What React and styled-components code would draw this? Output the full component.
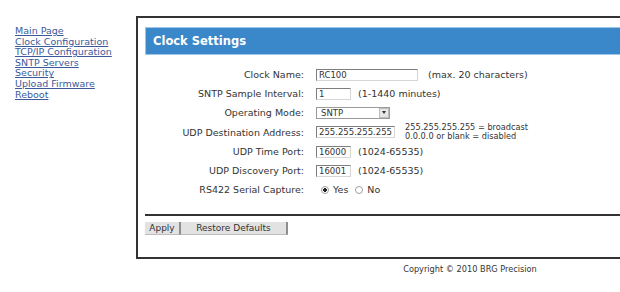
import React from "react";
import styled, { createGlobalStyle } from "styled-components";

const GlobalStyle = createGlobalStyle`
  html, body {
    margin: 0;
    padding: 0;
    background: #ffffff;
    overflow: hidden;
  }
  body {
    font-family: "DejaVu Sans", Verdana, sans-serif;
    color: #333333;
  }
`;

const Page = styled.div`
  display: flex;
  align-items: flex-start;
  width: max-content;
  padding: 16px 0 0 15px;
`;

const Nav = styled.nav`
  width: 121px;
  padding-top: 10px;
  display: flex;
  flex-direction: column;
`;

const NavLink = styled.a`
  font-size: 9.5px;
  line-height: 10.6px;
  color: #3c5a9a;
  text-decoration: underline;
  width: max-content;
`;

const Main = styled.div`
  width: 668px;
  display: flex;
  flex-direction: column;
`;

const Panel = styled.div`
  border: 2px solid #333333;
  padding: 9px 7px 22px 7px;
`;

const Header = styled.div`
  height: 26px;
  display: flex;
  align-items: center;
  padding-left: 7px;
  background: #3a87c9;
  border: 1px solid #9cc6ea;
  color: #ffffff;
  font-weight: bold;
  font-size: 11.5px;
`;

const Form = styled.div`
  margin-top: 10px;
  display: grid;
  grid-template-columns: 159px 1fr;
  column-gap: 12px;
`;

const Label = styled.div`
  font-size: 9.5px;
  display: flex;
  align-items: center;
  justify-content: flex-end;
  height: ${(p) => (p.$tall ? "20px" : "19px")};
`;

const Field = styled.div`
  display: flex;
  align-items: center;
  gap: 7px;
  height: ${(p) => (p.$tall ? "20px" : "19px")};
`;

const TextInput = styled.input`
  box-sizing: border-box;
  width: ${(p) => p.$w}px;
  height: 12px;
  padding: 0 2px;
  margin: 0;
  border: 1px solid;
  border-color: #7d7d7d #d6d6d6 #d6d6d6 #7d7d7d;
  font-family: "DejaVu Sans", Verdana, sans-serif;
  font-size: 8.5px;
  color: #333333;
  background: #ffffff;
  outline: none;
`;

const Hint = styled.span`
  font-size: 9.5px;
  color: #333333;
  white-space: nowrap;
  margin-left: ${(p) => p.$shift || 0}px;
`;

const SmallNote = styled.div`
  font-size: 8.2px;
  line-height: 9px;
  color: #333333;
  margin-left: 3px;
  white-space: nowrap;
`;

const SelectBox = styled.div`
  box-sizing: border-box;
  width: 74px;
  height: 12px;
  border: 1px solid #9a9a9a;
  background: #ffffff;
  display: flex;
  align-items: center;
  justify-content: space-between;
  padding: 0 0 0 4px;
  font-size: 8.5px;
  color: #333333;
`;

const SelectArrow = styled.span`
  width: 10px;
  height: 10px;
  box-sizing: border-box;
  background: #e6e6e6;
  border: 1px solid #bdbdbd;
  display: flex;
  align-items: center;
  justify-content: center;

  &::after {
    content: "";
    border-left: 2.5px solid transparent;
    border-right: 2.5px solid transparent;
    border-top: 3px solid #333333;
  }
`;

const RadioGroup = styled.div`
  display: flex;
  align-items: center;
  gap: 7px;
  padding-left: 5px;
`;

const RadioLabel = styled.label`
  display: flex;
  align-items: center;
  gap: 4px;
  font-size: 9.5px;
`;

const Radio = styled.input`
  appearance: none;
  margin: 0;
  width: 8px;
  height: 8px;
  border-radius: 50%;
  border: 1px solid #a0a0a0;
  background: #ffffff;

  &:checked {
    background: radial-gradient(circle, #222 0 1.6px, #ffffff 2px);
  }
`;

const Separator = styled.hr`
  margin: 15px 0 0 0;
  border: none;
  height: 2px;
  background: #333333;
`;

const ButtonRow = styled.div`
  margin-top: 6px;
  display: flex;
`;

const Button = styled.button`
  box-sizing: border-box;
  width: ${(p) => p.$w}px;
  height: 13px;
  margin: 0;
  padding: 0;
  border: none;
  border-right: 2px solid #8e8e8e;
  border-bottom: 1px solid #bcbcbc;
  background: #e2e2e2;
  font-family: "DejaVu Sans", Verdana, sans-serif;
  font-size: 9px;
  line-height: 12px;
  color: #333333;
`;

const Copyright = styled.div`
  margin-top: 5px;
  text-align: center;
  font-size: 8.2px;
  color: #333333;
`;

const navItems = [
  "Main Page",
  "Clock Configuration",
  "TCP/IP Configuration",
  "SNTP Servers",
  "Security",
  "Upload Firmware",
  "Reboot",
];

export default function App() {
  return (
    <>
      <GlobalStyle />
      <Page>
        <Nav>
          {navItems.map((item) => (
            <NavLink key={item} href="#">
              {item}
            </NavLink>
          ))}
        </Nav>
        <Main>
          <Panel>
            <Header>Clock Settings</Header>
            <Form>
              <Label>Clock Name:</Label>
              <Field>
                <TextInput $w={102} defaultValue="RC100" />
                <Hint $shift={3}>(max. 20 characters)</Hint>
              </Field>

              <Label>SNTP Sample Interval:</Label>
              <Field>
                <TextInput $w={35} defaultValue="1" />
                <Hint>(1-1440 minutes)</Hint>
              </Field>

              <Label>Operating Mode:</Label>
              <Field>
                <SelectBox role="combobox" aria-expanded="false">
                  SNTP
                  <SelectArrow />
                </SelectBox>
              </Field>

              <Label $tall>UDP Destination Address:</Label>
              <Field $tall>
                <TextInput $w={79} defaultValue="255.255.255.255" />
                <SmallNote>
                  255.255.255.255 = broadcast
                  <br />
                  0.0.0.0 or blank = disabled
                </SmallNote>
              </Field>

              <Label>UDP Time Port:</Label>
              <Field>
                <TextInput $w={35} defaultValue="16000" />
                <Hint>(1024-65535)</Hint>
              </Field>

              <Label>UDP Discovery Port:</Label>
              <Field>
                <TextInput $w={35} defaultValue="16001" />
                <Hint>(1024-65535)</Hint>
              </Field>

              <Label>RS422 Serial Capture:</Label>
              <Field>
                <RadioGroup>
                  <RadioLabel>
                    <Radio type="radio" name="rs422" defaultChecked />
                    Yes
                  </RadioLabel>
                  <RadioLabel>
                    <Radio type="radio" name="rs422" />
                    No
                  </RadioLabel>
                </RadioGroup>
              </Field>
            </Form>
            <Separator />
            <ButtonRow>
              <Button $w={36}>Apply</Button>
              <Button $w={107}>Restore Defaults</Button>
            </ButtonRow>
          </Panel>
          <Copyright>Copyright © 2010 BRG Precision</Copyright>
        </Main>
      </Page>
    </>
  );
}
